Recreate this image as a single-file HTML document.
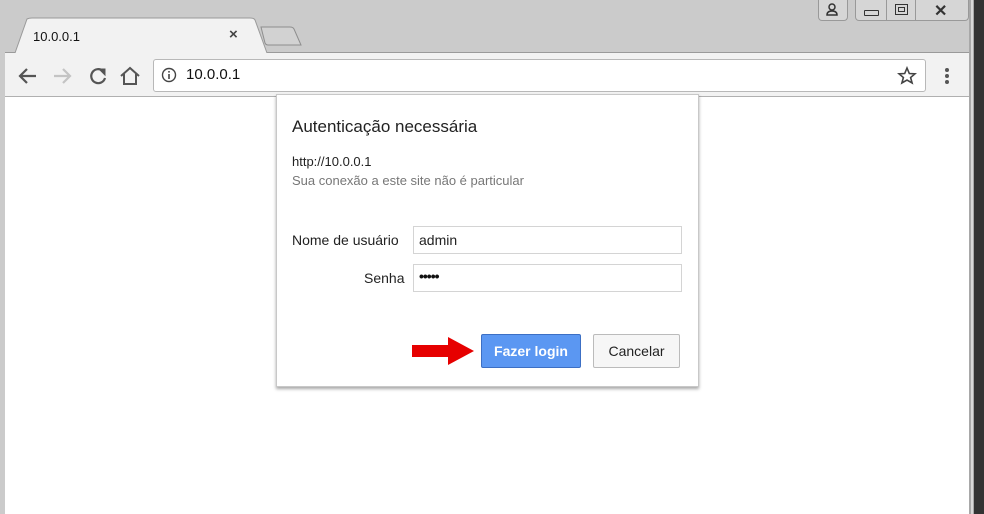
<!DOCTYPE html>
<html><head><style>
body{margin:0;width:984px;height:514px;position:relative;overflow:hidden;background:#cbcbcb;font-family:"Liberation Sans",sans-serif}
.a{position:absolute}
</style></head><body>
<div class="a" style="left:974px;top:0;width:10px;height:514px;background:#333"></div>
<div class="a" style="left:969px;top:0;width:5px;height:514px;background:#a8a8a8"></div>
<div class="a" style="left:971px;top:0;width:2px;height:514px;background:#d8d8d8"></div>
<!-- caption buttons -->
<div class="a" style="left:818px;top:0;width:28px;height:20px;border:1px solid #999;border-top:none;border-radius:0 0 4px 4px;background:#d6d6d6"></div>
<svg class="a" style="left:824px;top:2px" width="16" height="14"><circle cx="8" cy="5" r="3" fill="none" stroke="#333" stroke-width="1.5"/><path d="M3 13 Q3 9 8 9 Q13 9 13 13Z" fill="none" stroke="#333" stroke-width="1.5"/></svg>
<div class="a" style="left:855px;top:0;width:112px;height:20px;border:1px solid #999;border-top:none;border-radius:0 0 4px 4px;background:#d6d6d6"></div>
<div class="a" style="left:886px;top:0;width:1px;height:20px;background:#999"></div>
<div class="a" style="left:915px;top:0;width:1px;height:20px;background:#999"></div>
<div class="a" style="left:864px;top:10px;width:13px;height:4px;border:1px solid #333;border-radius:1px"></div>
<div class="a" style="left:895px;top:4px;width:11px;height:9px;border:1px solid #333"></div>
<div class="a" style="left:898px;top:7px;width:5px;height:3px;border:1px solid #333"></div>
<div class="a" style="left:934px;top:1px;font-size:16px;color:#333;font-weight:bold">✕</div>
<!-- tab -->
<svg class="a" style="left:5px;top:17px" width="300" height="37">
<path d="M0 36 L10 36 L22 2 Q24 1 27 1 L245 1 Q249 1 250 3 L262 36 L300 36" fill="#f2f2f2" stroke="#9a9a9a"/>
<path d="M256 10 L285 10 Q288 10 289 12 L296 28 L263 28 Q261 28 260 26Z" fill="#d2d2d2" stroke="#8e8e8e"/>
</svg>
<div class="a" style="left:5px;top:53px;width:964px;height:44px;background:#f2f2f2"></div>
<div class="a" style="left:5px;top:52px;width:10px;height:1px;background:#9a9a9a"></div>
<div class="a" style="left:267px;top:52px;width:702px;height:1px;background:#9a9a9a"></div>
<div class="a" style="left:33px;top:29px;font-size:13px;color:#111">10.0.0.1</div>
<div class="a" style="left:229px;top:26px;font-size:15px;color:#444;font-weight:bold">×</div>
<!-- toolbar icons -->
<svg class="a" style="left:17px;top:65px" width="130" height="22" fill="none" stroke-width="2.2">
<path d="M3 11 H19 M10 4 L3 11 L10 18" stroke="#555"/>
<path d="M37 11 H53 M46 4 L53 11 L46 18" stroke="#c4c4c4"/>
<path d="M86 6 A7 7 0 1 0 88 13" stroke="#555"/><path d="M82 4 L88 4 L88 10Z" fill="#555" stroke="#555" stroke-width="1"/>
<path d="M104 11 L113 3 L122 11 M107 9 V19 H119 V9" stroke="#555" stroke-width="2"/>
</svg>
<div class="a" style="left:153px;top:59px;width:771px;height:31px;background:#fff;border:1px solid #b8b8b8;border-radius:3px"></div>
<svg class="a" style="left:161px;top:67px" width="16" height="16"><circle cx="8" cy="8" r="6.5" fill="none" stroke="#444" stroke-width="1.4"/><rect x="7.2" y="7" width="1.6" height="5" fill="#444"/><rect x="7.2" y="4" width="1.6" height="1.6" fill="#444"/></svg>
<div class="a" style="left:186px;top:66px;font-size:15px;color:#111">10.0.0.1</div>
<svg class="a" style="left:897px;top:66px" width="20" height="19"><path d="M10 2 L12.3 7.5 L18 7.8 L13.6 11.5 L15.1 17 L10 14 L4.9 17 L6.4 11.5 L2 7.8 L7.7 7.5Z" fill="none" stroke="#444" stroke-width="1.6"/></svg>
<div class="a" style="left:945px;top:68px;width:4px;height:4px;border-radius:2px;background:#555;box-shadow:0 6px #555,0 12px #555"></div>
<!-- content -->
<div class="a" style="left:5px;top:96px;width:964px;height:1px;background:#b0b0b0"></div>
<div class="a" style="left:5px;top:97px;width:964px;height:417px;background:#fff"></div>
<!-- dialog -->
<div class="a" style="left:276px;top:94px;width:421px;height:291px;background:#fff;border:1px solid #c8c8c8;box-shadow:0 2px 3px rgba(0,0,0,.35)"></div>
<div class="a" style="left:292px;top:117px;font-size:17px;color:#222">Autenticação necessária</div>
<div class="a" style="left:292px;top:154px;font-size:13px;color:#222">http://10.0.0.1</div>
<div class="a" style="left:292px;top:173px;font-size:13px;color:#777">Sua conexão a este site não é particular</div>
<div class="a" style="left:292px;top:232px;font-size:14px;color:#222">Nome de usuário</div>
<div class="a" style="left:364px;top:270px;font-size:14px;color:#222">Senha</div>
<div class="a" style="left:413px;top:226px;width:267px;height:26px;border:1px solid #d4d4d4"></div>
<div class="a" style="left:419px;top:232px;font-size:14px;color:#222">admin</div>
<div class="a" style="left:413px;top:264px;width:267px;height:26px;border:1px solid #d4d4d4"></div>
<div class="a" style="left:419px;top:268px;font-size:14px;color:#111;letter-spacing:-1px;font-weight:bold">•••••</div>
<svg class="a" style="left:410px;top:335px" width="66" height="32"><path d="M2 10 H38 V2 L64 16 L38 30 V22 H2Z" fill="#e60000"/></svg>
<div class="a" style="left:481px;top:334px;width:98px;height:32px;background:#5b97f2;border:1px solid #3c6fc4;border-radius:2px;color:#fff;font-weight:bold;font-size:14px;text-align:center;line-height:32px">Fazer login</div>
<div class="a" style="left:593px;top:334px;width:85px;height:32px;background:#f6f6f6;border:1px solid #bbb;border-radius:2px;color:#222;font-size:14px;text-align:center;line-height:32px">Cancelar</div>
</body></html>
